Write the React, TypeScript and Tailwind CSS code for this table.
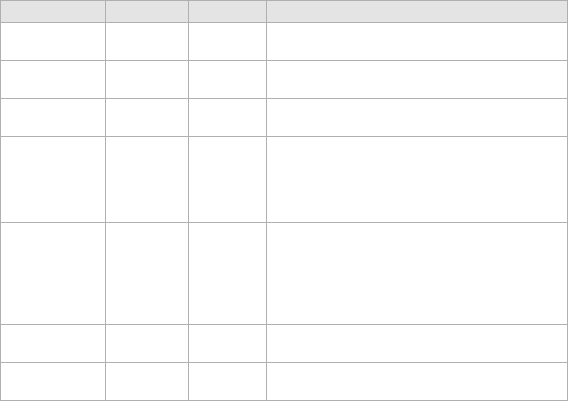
const cols = ["w-[105px]", "w-[83px]", "w-[78px]", "w-[301px]"];

const rows = ["h-[38px]", "h-[38px]", "h-[38px]", "h-[86px]", "h-[102px]", "h-[38px]", "h-[38px]"];

const App = () => {
    return (
        <div className="w-[568px] h-[401px] bg-white font-['Liberation_Sans',sans-serif]">
            <div className="flex flex-col border-t border-l border-[#b0b0b0]">
                <div className="flex h-[22px] bg-[#e4e4e4]">
                    {cols.map((c, i) => (
                        <div key={i} className={`${c} border-r border-b border-[#b0b0b0]`}></div>
                    ))}
                </div>
                {rows.map((h, r) => (
                    <div key={r} className={`flex ${h}`}>
                        {cols.map((c, i) => (
                            <div key={i} className={`${c} border-r border-b border-[#b0b0b0]`}></div>
                        ))}
                    </div>
                ))}
            </div>
        </div>
    );
};

export default App;
